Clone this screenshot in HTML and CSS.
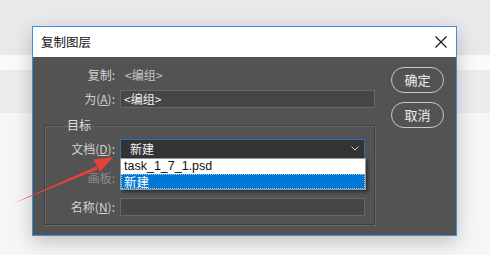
FILE: index.html
```html
<!DOCTYPE html>
<html lang="zh-CN">
<head>
    <meta charset="UTF-8">
    <title>复制图层</title>
    <link rel="stylesheet" href="styles.css">
</head>
<body>
    <div class="desk">
        <div class="dialog">
            <div class="titlebar">
                <span class="title">复制图层</span>
                <svg class="close" width="12" height="12" viewBox="0 0 12 12">
                    <path d="M0.5 0.5 L11.5 11.5 M11.5 0.5 L0.5 11.5" stroke="#111" stroke-width="1.1" fill="none"/>
                </svg>
            </div>
            <div class="dlg-body">
                <div class="form">
                    <div class="row">
                        <span class="lbl">复制:</span>
                        <span class="val">&lt;编组&gt;</span>
                    </div>
                    <div class="row">
                        <label class="lbl">为(<u>A</u>):</label>
                        <div class="field">&lt;编组&gt;</div>
                    </div>
                    <fieldset class="group">
                        <legend>目标</legend>
                        <div class="row tall">
                            <label class="lbl">文档(<u>D</u>):</label>
                            <div class="select">
                                <span>新建</span>
                                <svg class="chev" width="8" height="5" viewBox="0 0 8 5">
                                    <path d="M0.5 0.5 L4 4 L7.5 0.5" stroke="#cfcfcf" stroke-width="1" fill="none"/>
                                </svg>
                                <ul class="options">
                                    <li>task_1_7_1.psd</li>
                                    <li class="picked">新建</li>
                                </ul>
                            </div>
                        </div>
                        <div class="row tall">
                            <span class="lbl dim">画板:</span>
                        </div>
                        <div class="row tall">
                            <label class="lbl">名称(<u>N</u>):</label>
                            <div class="field"></div>
                        </div>
                    </fieldset>
                </div>
                <div class="buttons">
                    <button class="btn">确定</button>
                    <button class="btn">取消</button>
                </div>
            </div>
        </div>
        <svg class="arrow" width="120" height="60" viewBox="0 0 120 60">
            <path d="M12 54 L96 16.5 L97.5 19.5 Z" fill="#e8403a"/>
            <path d="M113 7 L93.5 9.5 L100 22 Z" fill="#e8403a"/>
        </svg>
    </div>
</body>
</html>
```

FILE: styles.css
```css
body {
    margin: 0;
    width: 490px;
    height: 255px;
    overflow: hidden;
    font-family: "Noto Sans CJK SC", "Liberation Sans", sans-serif;
    font-size: 12px;
    background: linear-gradient(#e9e9eb 0, #e9e9eb 55px, #fafafa 55px, #fafafa 70px, #ececee 70px, #ececee 113px, #f6f6f6 113px);
}
.desk {
    position: relative;
    height: 255px;
    padding: 26px 0 0 32px;
    box-sizing: border-box;
}
.dialog {
    width: 423px;
    border: 1px solid #3d8fdc;
    box-shadow: 0 6px 18px rgba(0, 0, 0, 0.22);
}
.titlebar {
    height: 30px;
    background: #fff;
    display: flex;
    align-items: center;
    justify-content: space-between;
    padding: 0 9px 0 8px;
}
.title {
    color: #111;
    font-size: 12.5px;
    line-height: 16px;
}
.dlg-body {
    height: 178px;
    box-sizing: border-box;
    background: #535353;
    display: flex;
    gap: 16px;
    padding: 9px 10px 11px 11px;
}
.form {
    width: 331px;
}
.row {
    display: flex;
    align-items: center;
    gap: 5px;
    height: 18px;
}
.row + .row {
    margin-top: 6px;
}
.lbl {
    width: 71px;
    flex: none;
    text-align: right;
    color: #d2d2d2;
    line-height: 16px;
}
.lbl u {
    text-underline-offset: 1px;
}
.lbl.dim {
    color: #8c8c8c;
}
.val {
    color: #c6c6c6;
    padding-left: 5px;
    line-height: 16px;
}
.field {
    flex: 1;
    height: 18px;
    box-sizing: border-box;
    background: #464646;
    border: 1px solid #676767;
    color: #f2f2f2;
    padding-left: 3px;
    line-height: 16px;
}
.group {
    margin: 9px 0 0;
    padding: 6px 9px 8px 0;
    border: 1px solid #3f3f3f;
    box-shadow: inset 1px 1px 0 #676767, 1px 1px 0 #676767;
}
.group legend {
    margin-left: 19px;
    padding: 0 3px;
    color: #dedede;
    line-height: 16px;
}
.group .lbl {
    width: 70px;
}
.row.tall {
    height: 19px;
}
.group .row + .row {
    margin-top: 10px;
}
.select {
    position: relative;
    flex: 1;
    height: 20px;
    box-sizing: border-box;
    background: #333;
    border: 1px solid #1f74c6;
    color: #f5f5f5;
    display: flex;
    align-items: center;
    justify-content: space-between;
    padding: 0 5px 0 9px;
    line-height: 16px;
}
.options {
    position: absolute;
    top: 18px;
    left: -1px;
    width: 246px;
    margin: 0;
    padding: 0;
    list-style: none;
    background: #fff;
    border: 1px solid #9a9a9a;
    box-sizing: border-box;
    box-shadow: 2px 2px 3px rgba(0, 0, 0, 0.45);
    z-index: 2;
}
.options li {
    height: 15px;
    padding-left: 3px;
    line-height: 15px;
    color: #111;
    font-family: "Liberation Sans", "Noto Sans CJK SC", sans-serif;
    font-size: 12.5px;
}
.options li.picked {
    background: #0078d7;
    color: #fff;
    outline: 1px dotted #9cc8ee;
    outline-offset: -1px;
    font-family: "Noto Sans CJK SC", sans-serif;
}
.buttons {
    display: flex;
    flex-direction: column;
    gap: 9px;
    padding-top: 1px;
}
.btn {
    width: 53px;
    height: 26px;
    border: 1.5px solid #c8c8c8;
    border-radius: 13px;
    background: transparent;
    color: #eee;
    font-family: "Noto Sans CJK SC", sans-serif;
    font-size: 13px;
    line-height: 16px;
    padding: 0;
}
.arrow {
    position: absolute;
    left: 0;
    top: 150px;
    z-index: 3;
}
```
